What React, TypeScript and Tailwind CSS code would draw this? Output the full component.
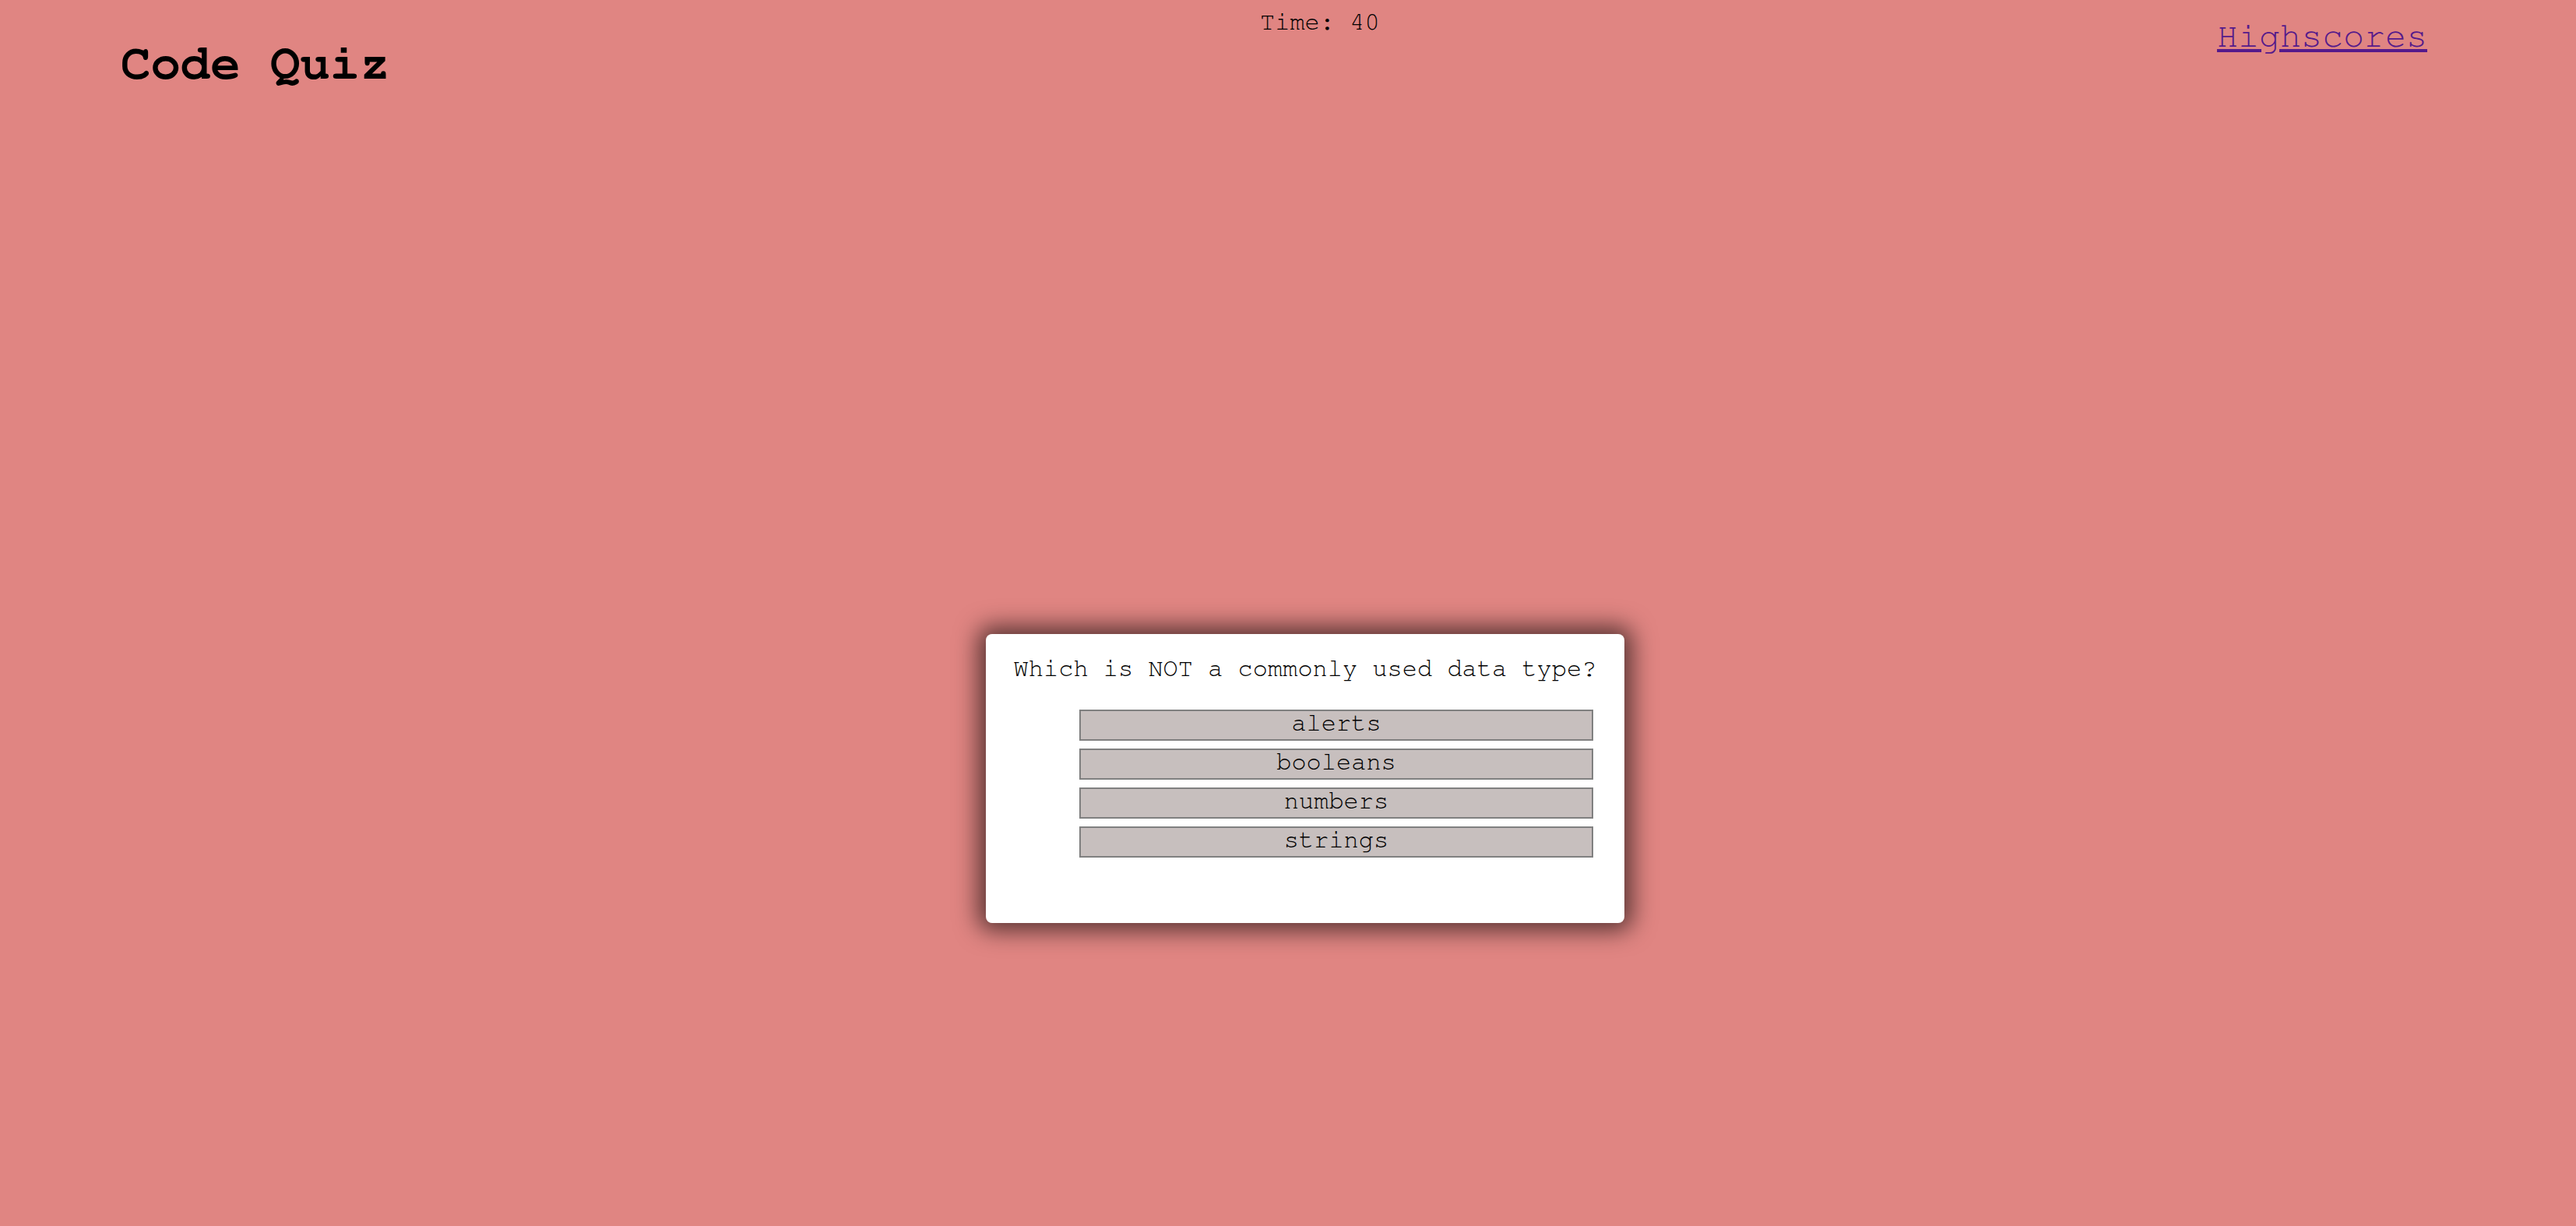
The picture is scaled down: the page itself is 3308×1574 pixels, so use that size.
const choices = ["alerts", "booleans", "numbers", "strings"];

export default function App() {
  return (
    <div
      className="min-h-[1574px] w-full bg-[#e08582] text-black"
      style={{
        fontFamily:
          '"Nimbus Mono PS", "Nimbus Mono L", FreeMono, Courier, "Courier New", "Liberation Mono", monospace',
      }}
    >
      {/* Header */}
      <header className="flex items-start justify-between pl-[155px] pr-[191px]">
        <h1 className="mt-[50px] text-[64px] font-bold leading-none">Code Quiz</h1>
        <div className="ml-[42px] mt-[12px] text-[32px] leading-none">Time: 40</div>
        <a href="#" className="mt-[24px] text-[45px] leading-none text-[#551a8b] underline">
          Highscores
        </a>
      </header>

      {/* Quiz card */}
      <main className="flex justify-center pl-[44px] pt-[700px]">
        <div className="w-[820px] rounded-[8px] bg-white pb-[84px] pt-[26px] shadow-[0_0_30px_10px_rgba(0,0,0,0.6)]">
          <p className="text-center text-[32px] leading-[37px]">
            Which is NOT a commonly used data type?
          </p>
          <div className="ml-[120px] mt-[34px] flex w-[660px] flex-col gap-[10px]">
            {choices.map((choice) => (
              <button
                key={choice}
                className="h-[40px] w-full border-2 border-[#808080] bg-[#c7bfbe] pb-[6px] text-center text-[32px] leading-[30px]"
              >
                {choice}
              </button>
            ))}
          </div>
        </div>
      </main>
    </div>
  );
}
